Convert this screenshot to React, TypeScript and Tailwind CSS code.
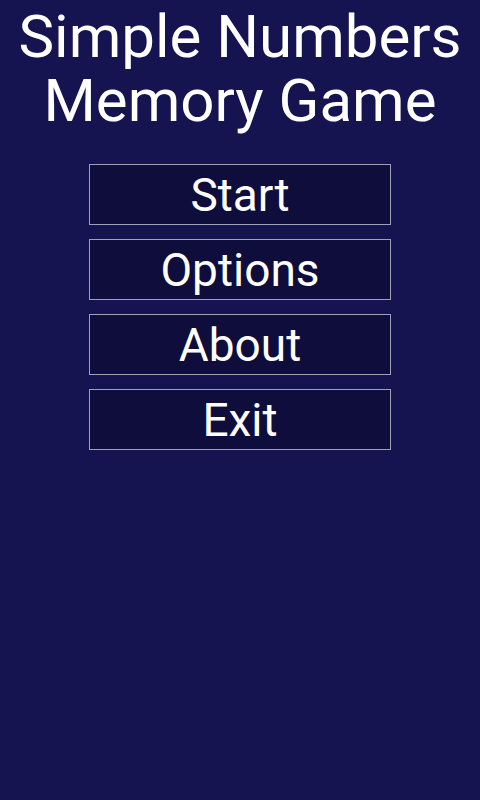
export default function App() {
  const items = ["Start", "Options", "About", "Exit"];
  return (
    <div
      className="w-[480px] h-[800px] bg-[#151450] flex flex-col items-center"
      style={{ fontFamily: "Roboto, sans-serif" }}
    >
      <h1 className="text-white text-[60px] leading-[64px] text-center pt-[5px]">
        Simple Numbers
        <br />
        Memory Game
      </h1>
      <div className="flex flex-col gap-[14px] mt-[31px]">
        {items.map((t) => (
          <button
            key={t}
            className="w-[302px] h-[61px] bg-[#0e0d3b] border border-[#a0a0b8] text-white text-[46px] leading-none flex items-center justify-center"
          >
            {t}
          </button>
        ))}
      </div>
    </div>
  );
}
